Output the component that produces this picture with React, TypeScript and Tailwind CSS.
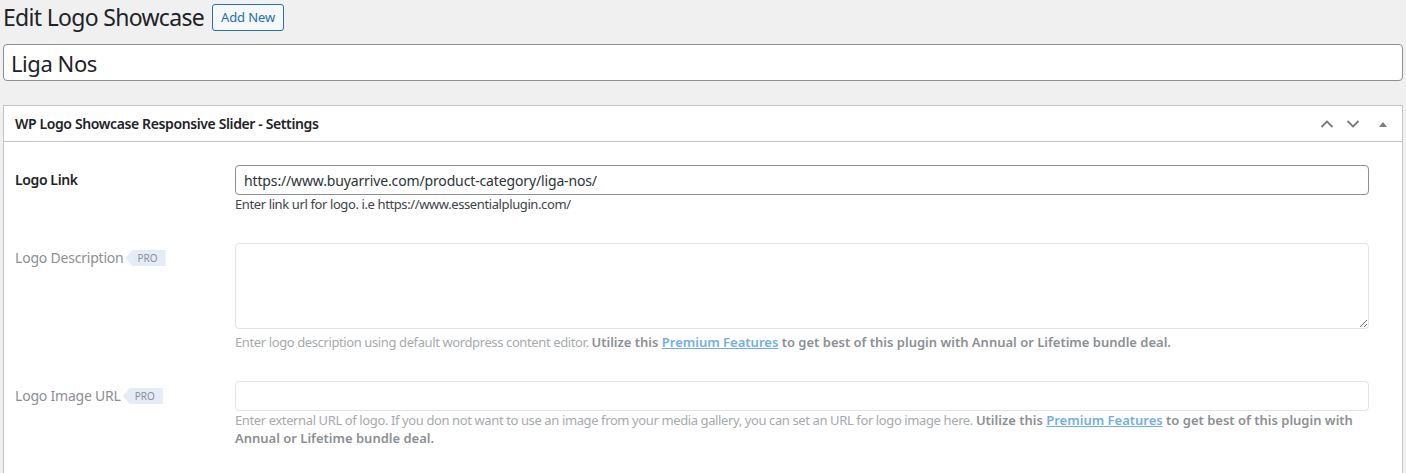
import React from 'react';

const font = "font-['Noto_Sans','Liberation_Sans',sans-serif]";

function ProTag() {
  return (
    <span className="ml-[2px] inline-flex h-[16px] items-center bg-[#e6ebf8] pl-[12px] pr-[8px] text-[10px] leading-none tracking-normal text-[#8c8f94] [clip-path:polygon(7px_0,100%_0,100%_100%,7px_100%,0_50%)]">
      PRO
    </span>
  );
}

function Premium() {
  return (
    <span className="font-semibold tracking-normal text-[#8c8f94]">
      Utilize this{' '}
      <a href="#" className="text-[#72aee6] underline">
        Premium Features
      </a>{' '}
      to get best of this plugin with Annual or Lifetime bundle deal.
    </span>
  );
}

export default function App() {
  return (
    <div className={`h-[473px] overflow-hidden bg-[#f0f0f1] px-[3px] ${font}`}>
      <div className="flex h-[35px] items-center">
        <h1 className="text-[23px] font-normal leading-none tracking-[-0.03em] text-[#1d2327]">Edit Logo Showcase</h1>
        <button className="ml-[8px] h-[27px] rounded-[3px] border border-[#2271b1] bg-[#f6f7f7] px-[8px] text-[13px] tracking-[-0.01em] text-[#2271b1]">
          Add New
        </button>
      </div>

      <input
        readOnly
        value="Liga Nos"
        className="mt-[9px] block h-[37px] w-full rounded-[4px] border border-[#8c8f94] bg-white px-[7px] text-[22px] tracking-[-0.02em] text-[#1d2327] outline-none"
      />

      <div className="mt-[24px] border border-[#c3c4c7] bg-white">
        <div className="flex h-[36px] items-center border-b border-[#c3c4c7] pl-[11px] pr-[14px]">
          <h2 className="flex-1 text-[14px] font-semibold tracking-[-0.027em] text-[#1d2327]">
            WP Logo Showcase Responsive Slider - Settings
          </h2>
          <div className="flex items-center gap-[12px] text-[#787c82]">
            <svg width="14" height="14" viewBox="0 0 14 14" fill="none" stroke="currentColor" strokeWidth="1.8">
              <path d="M1.5 10 L7 4.5 L12.5 10" />
            </svg>
            <svg width="14" height="14" viewBox="0 0 14 14" fill="none" stroke="currentColor" strokeWidth="1.8">
              <path d="M1.5 4 L7 9.5 L12.5 4" />
            </svg>
            <svg className="ml-[6px]" width="10" height="10" viewBox="0 0 10 10" fill="currentColor">
              <path d="M1 8 L5 3 L9 8 Z" />
            </svg>
          </div>
        </div>

        <div className="pb-[40px] pl-[11px] pr-[33px] pt-[23px] text-[13px] tracking-[-0.03em]">
          <div className="flex">
            <div className="w-[220px] shrink-0 pt-[6px] text-[14px] font-semibold leading-[18px] text-[#1d2327]">
              Logo Link
            </div>
            <div className="flex-1">
              <input
                readOnly
                value="https://www.buyarrive.com/product-category/liga-nos/"
                className="block h-[30px] w-full rounded-[4px] border border-[#8c8f94] px-[8px] text-[14px] tracking-[-0.01em] text-[#2c3338] outline-none"
              />
              <p className="leading-[18px] text-[#3c434a]">
                Enter link url for logo. i.e https://www.essentialplugin.com/
              </p>
            </div>
          </div>

          <div className="mt-[30px] flex">
            <div className="flex w-[220px] shrink-0 items-center self-start pt-[6px] text-[14px] leading-[18px] tracking-[-0.015em] text-[#8c8f94]">
              Logo Description
              <ProTag />
            </div>
            <div className="flex-1">
              <textarea
                readOnly
                className="block h-[86px] w-full rounded-[4px] border border-[#e3e4e6] bg-white outline-none"
              />
              <p className="mt-[4px] leading-[18px] text-[#a7aaad]">
                Enter logo description using default wordpress content editor. <Premium />
              </p>
            </div>
          </div>

          <div className="mt-[30px] flex">
            <div className="flex w-[220px] shrink-0 items-center self-start pt-[6px] text-[14px] leading-[18px] tracking-[-0.015em] text-[#8c8f94]">
              Logo Image URL
              <ProTag />
            </div>
            <div className="flex-1">
              <input
                readOnly
                className="block h-[30px] w-full rounded-[4px] border border-[#e3e4e6] outline-none"
              />
              <p className="leading-[18px] text-[#a7aaad]">
                Enter external URL of logo. If you don not want to use an image from your media gallery, you can set an URL
                for logo image here. <Premium />
              </p>
            </div>
          </div>
        </div>
      </div>
    </div>
  );
}
